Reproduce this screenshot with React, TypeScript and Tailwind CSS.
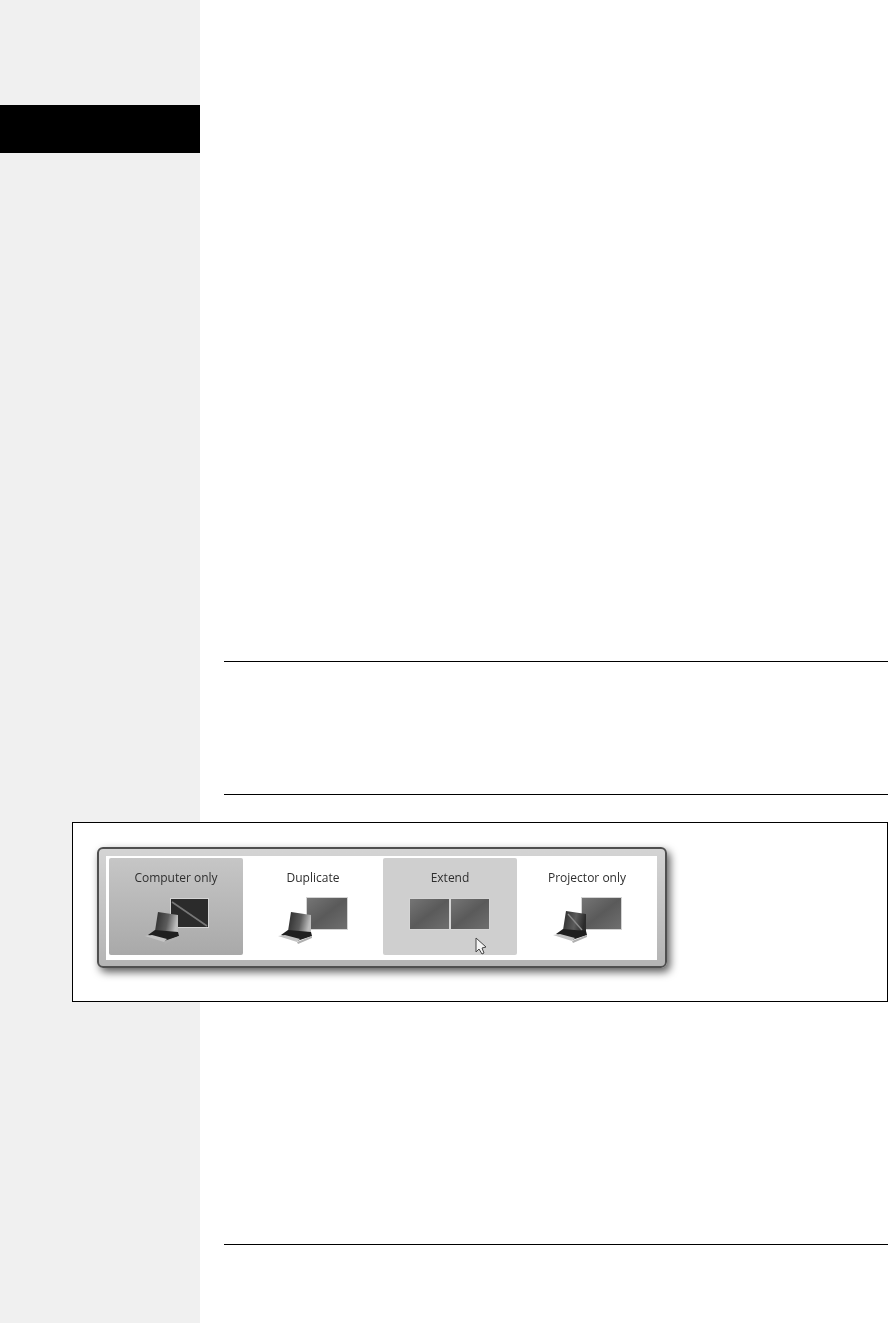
function Laptop({ x, y, id, variant }: { x: number; y: number; id: string; variant: 'fade' | 'dark' }) {
  return (
    <g transform={`translate(${x} ${y})`}>
      <defs>
        <linearGradient id={id} x1="0" y1="0" x2="1" y2="0.2">
          <stop offset="0" stopColor="#2a2a2a" />
          <stop offset="0.6" stopColor="#5c5c5c" />
          <stop offset="1" stopColor={variant === 'fade' ? '#bdbdbd' : '#2a2a2a'} />
        </linearGradient>
      </defs>
      <polygon points="13,0 33,3 33,21 10,19" fill={`url(#${id})`} />
      {variant === 'dark' && <line x1="15" y1="3" x2="29" y2="19" stroke="#8a8a8a" strokeWidth="1.4" />}
      <polygon points="10,18 33,20 34,24 19,29 3,23" fill="#1f1f1f" />
      <polygon points="0,24 7,23 22,27 19,30" fill="#c4c4c4" />
      <polygon points="19,30 34,24 34,26 20,32" fill="#b0b0b0" />
    </g>
  )
}

function Monitor({ x, y, w, h, id, off }: { x: number; y: number; w: number; h: number; id: string; off?: boolean }) {
  return (
    <g>
      <defs>
        <linearGradient id={id} x1="0" y1="0" x2="1" y2="1">
          <stop offset="0" stopColor="#757575" />
          <stop offset="0.5" stopColor="#5a5a5a" />
          <stop offset="1" stopColor="#6f6f6f" />
        </linearGradient>
      </defs>
      <rect x={x - 1} y={y - 1} width={w + 2} height={h + 2} fill="#d4d4d4" />
      <rect x={x} y={y} width={w} height={h} fill={off ? '#2b2b2b' : `url(#${id})`} />
      {off && <line x1={x + 1} y1={y + 3} x2={x + w - 1} y2={y + h - 1} stroke="#777777" strokeWidth="1.6" />}
    </g>
  )
}

const tiles = [
  { label: 'Computer only', className: 'bg-gradient-to-b from-[#c6c6c6] to-[#a9a9a9]' },
  { label: 'Duplicate', className: 'bg-white' },
  { label: 'Extend', className: 'bg-[#cfcfcf]' },
  { label: 'Projector only', className: 'bg-white' },
]

function TileArt({ index }: { index: number }) {
  return (
    <svg viewBox="0 0 134 62" className="h-[62px] w-[134px] blur-[0.7px]">
      {index === 0 && (
        <>
          <Monitor x={62} y={6} w={37} h={28} id="m0" off />
          <Laptop x={36} y={19} id="l0" variant="fade" />
        </>
      )}
      {index === 1 && (
        <>
          <Monitor x={61} y={5} w={40} h={31} id="m1" />
          <Laptop x={32} y={19} id="l1" variant="fade" />
        </>
      )}
      {index === 2 && (
        <>
          <Monitor x={27} y={6} w={39} h={30} id="m2" />
          <Monitor x={68} y={6} w={38} h={30} id="m3" />
          <polygon
            points="93,45 93,59 96,56 99,61 101,60 99,55 103,54"
            fill="#f4f4f4"
            stroke="#444444"
            strokeWidth="1"
          />
        </>
      )}
      {index === 3 && (
        <>
          <Monitor x={62} y={5} w={39} h={31} id="m4" />
          <Laptop x={33} y={18} id="l2" variant="dark" />
        </>
      )}
    </svg>
  )
}

export default function App() {
  return (
    <div className="h-[1323px] w-[888px] overflow-hidden bg-white font-['Open_Sans','Noto_Sans',sans-serif]">
      <div className="flex h-[822px]">
        <aside className="w-[200px] bg-[#f0f0f0] pt-[105px]">
          <div className="h-[48px] bg-black" />
        </aside>
        <main className="flex-1 pl-[24px] pt-[661px]">
          <div className="h-px bg-black" />
          <div className="mt-[132px] h-px bg-black" />
        </main>
      </div>

      <div className="flex h-[180px]">
        <div className="w-[72px] bg-[#f0f0f0]" />
        <figure className="flex-1 border border-black bg-white pl-[24px] pt-[24px]">
          <div className="h-[121px] w-[570px] rounded-[6px] border-2 border-[#4f4f4f] bg-gradient-to-b from-[#d4d4d4] to-[#b4b4b4] pl-[7px] pt-[7px] shadow-[3px_4px_9px_rgba(0,0,0,0.65)] blur-[0.5px]">
            <div className="flex h-[104px] w-[551px] gap-[3px] bg-white pl-[3px] pt-[2px]">
              {tiles.map((tile, index) => (
                <div key={tile.label} className={`flex h-[97px] w-[134px] flex-col rounded-[2px] ${tile.className}`}>
                  <div className="h-[35px] pt-[12px] text-center text-[12px] leading-[16px] text-[#2e2e2e]">
                    {tile.label}
                  </div>
                  <TileArt index={index} />
                </div>
              ))}
            </div>
          </div>
        </figure>
      </div>

      <div className="flex h-[321px]">
        <aside className="w-[200px] bg-[#f0f0f0]" />
        <main className="flex-1 pl-[24px] pt-[242px]">
          <div className="h-px bg-black" />
        </main>
      </div>
    </div>
  )
}
